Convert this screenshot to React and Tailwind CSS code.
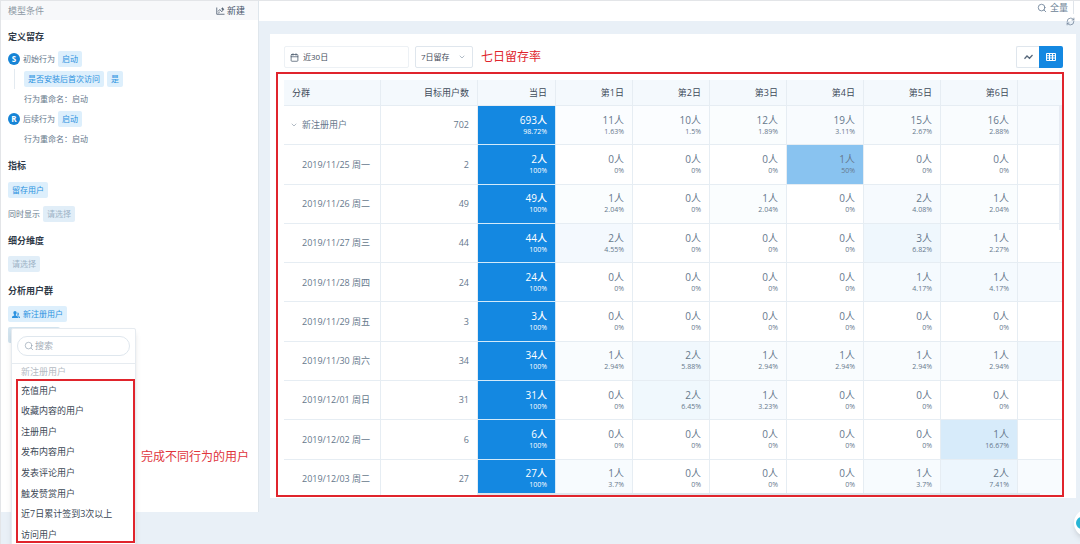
import React, { useState } from 'react';
import { Search, RefreshCw, ChevronDown, Calendar } from 'lucide-react';

const days = ['第1日', '第2日', '第3日', '第4日', '第5日', '第6日'];

// cells: [people, percent] for each day, next: percent of the column cut off by the scroll area
const rows = [
  { name: '新注册用户', total: 702, first: [693, 98.72], cells: [[11, 1.63], [10, 1.5], [12, 1.89], [19, 3.11], [15, 2.67], [16, 2.88]], next: 3 },
  { name: '2019/11/25 周一', total: 2, first: [2, 100], cells: [[0, 0], [0, 0], [0, 0], [1, 50], [0, 0], [0, 0]], next: 0 },
  { name: '2019/11/26 周二', total: 49, first: [49, 100], cells: [[1, 2.04], [0, 0], [1, 2.04], [0, 0], [2, 4.08], [1, 2.04]], next: 0 },
  { name: '2019/11/27 周三', total: 44, first: [44, 100], cells: [[2, 4.55], [0, 0], [0, 0], [0, 0], [3, 6.82], [1, 2.27]], next: 0 },
  { name: '2019/11/28 周四', total: 24, first: [24, 100], cells: [[0, 0], [0, 0], [0, 0], [0, 0], [1, 4.17], [1, 4.17]], next: 4 },
  { name: '2019/11/29 周五', total: 3, first: [3, 100], cells: [[0, 0], [0, 0], [0, 0], [0, 0], [0, 0], [0, 0]], next: 0 },
  { name: '2019/11/30 周六', total: 34, first: [34, 100], cells: [[1, 2.94], [2, 5.88], [1, 2.94], [1, 2.94], [1, 2.94], [1, 2.94]], next: 6 },
  { name: '2019/12/01 周日', total: 31, first: [31, 100], cells: [[0, 0], [2, 6.45], [1, 3.23], [0, 0], [0, 0], [0, 0]], next: 0 },
  { name: '2019/12/02 周一', total: 6, first: [6, 100], cells: [[0, 0], [0, 0], [0, 0], [0, 0], [0, 0], [1, 16.67]], next: 0 },
  { name: '2019/12/03 周二', total: 27, first: [27, 100], cells: [[1, 3.7], [0, 0], [0, 0], [0, 0], [1, 3.7], [2, 7.41]], next: 3 },
];

const groups = ['充值用户', '收藏内容的用户', '注册用户', '发布内容用户', '发表评论用户', '触发赞赏用户', '近7日累计签到3次以上', '访问用户'];

const tint = (percent) => ({ backgroundColor: `rgba(20, 136, 225, ${percent / 100})` });

const Chip = ({ children, muted }) => (
  <button
    className={`flex h-4 items-center gap-[3px] rounded-xs px-1 text-[8px] ${
      muted ? 'bg-[#e1eef8] text-[#9db3c6]' : 'bg-[#ddeffc] text-[#2b92e0]'
    }`}
  >
    {children}
  </button>
);

const Row = ({ children }) => <div className="flex h-5 items-center gap-[3px]">{children}</div>;

const Heading = ({ children }) => (
  <h2 className="h-5 text-[9px] leading-5 font-bold text-[#2f3a48]">{children}</h2>
);

const Badge = ({ children }) => (
  <span className="flex size-3 items-center justify-center rounded-full bg-[#1684d6] text-[8px] font-bold text-white">
    {children}
  </span>
);

const UsersIcon = () => (
  <svg viewBox="0 0 16 14" className="h-[7px] w-2" fill="currentColor">
    <path d="M6 0c2 0 3.200 1.500 3.200 3.500S8 7.200 7.600 7.600v1.200L11 10.400c.8.400 1 1 1 3.600H0c0-2.600.2-3.200 1-3.600l3.400-1.600V7.600C4 7.200 2.800 5.500 2.800 3.500S4 0 6 0z" />
    <path d="M11 3c1.800 0 2.600 1.300 2.600 2.800S13 8.400 12.500 8.900v.7l2.500 1.200c.8.400 1 1 1 3.200h-2.800c0-2.800-.5-3.800-1.600-4.400l-1.400-.7c.6-1 1-2.700.8-5.900z" />
  </svg>
);

const NewIcon = () => (
  <svg viewBox="0 0 18 16" className="h-2 w-[9px]" fill="none" stroke="currentColor" strokeWidth="1.600">
    <path d="M1.500 1v13.500H17" />
    <path d="M4 9l3.500-4 4 4.500L16 4" />
    <path d="M13 1v5M10.500 3.500h5M4.500 12l3-2" />
  </svg>
);

const LineIcon = () => (
  <svg viewBox="0 0 18 12" className="h-[6px] w-[9px]" fill="none" stroke="currentColor" strokeWidth="2.500">
    <path d="M1 9.500l5-5.500 5 4.500 6-6.500" />
  </svg>
);

const GridIcon = () => (
  <svg viewBox="0 0 20 16" className="h-2 w-[10px]" fill="none" stroke="currentColor" strokeWidth="2">
    <path d="M1 1h18v14H1zM1 5.500h18M1 10h18M7 1v14M13 1v14" />
  </svg>
);

const Figures = ({ value }) => (
  <>
    <div className="text-[10px] leading-[13px]">{value[0]}人</div>
    <div className="text-[7px] leading-[10px]">{value[1]}%</div>
  </>
);

const GroupMenu = () => (
  <div className="absolute top-[1px] left-[3px] z-10 w-[125px] rounded-xs border border-[#e6ebf0] bg-white shadow-md">
    <div className="border-b border-[#e6ebf0] px-[5px] py-[7px]">
      <label className="flex h-5 items-center gap-[1px] rounded-full border border-[#dfe7ee] px-1.5">
        <Search className="size-[10px] shrink-0 text-[#8b9bac]" strokeWidth={1.5} />
        <input aria-label="搜索" placeholder="搜索" className="w-full min-w-0 text-[9px] outline-none placeholder:text-[#a3adb8]" />
      </label>
    </div>
    <div className="flex h-4 items-center px-[9px] text-[9px] text-[#b4bbc3]">新注册用户</div>
    <ul className="flex h-[165px] flex-col text-[9px] text-[#3c4856]">
      {groups.map((group) => (
        <li key={group} className="flex flex-1 items-center">
          <button className="w-full px-[9px] text-left">{group}</button>
        </li>
      ))}
    </ul>
    <div className="pointer-events-none absolute top-[50px] right-0 left-1 h-[164px] border-2 border-[#e0242c]" />
  </div>
);

const Sidebar = () => (
  <aside className="relative mb-8 w-[258px] shrink-0 border-r border-[#dfe6ec] bg-white text-[8px] text-[#66788c]">
    <header className="flex h-[19px] items-center justify-between bg-[#f7f8fa] pr-[13px] pl-[7px] text-[9px]">
      <span className="text-[#8d98a5]">模型条件</span>
      <button className="flex items-center gap-[2px] text-[#46566a]">
        <NewIcon />
        新建
      </button>
    </header>

    <div className="flex flex-col gap-[7px] px-[7px] pt-[7px]">
      <section>
        <Heading>定义留存</Heading>
        <div className="pt-[2px]">
          <Row>
            <Badge>S</Badge>
            <span>初始行为</span>
            <Chip>启动</Chip>
          </Row>
          <div className="ml-[6px] border-l border-[#e3eaf0] pl-[9px]">
            <Row>
              <Chip>是否安装后首次访问</Chip>
              <Chip>是</Chip>
            </Row>
          </div>
          <div className="pl-4">
            <Row>行为重命名：启动</Row>
          </div>
          <Row>
            <Badge>R</Badge>
            <span>后续行为</span>
            <Chip>启动</Chip>
          </Row>
          <div className="pl-4">
            <Row>行为重命名：启动</Row>
          </div>
        </div>
      </section>

      <section className="flex flex-col gap-1">
        <Heading>指标</Heading>
        <Row>
          <Chip>留存用户</Chip>
        </Row>
        <Row>
          <span>同时显示</span>
          <Chip muted>请选择</Chip>
        </Row>
      </section>

      <section className="flex flex-col gap-[3px]">
        <Heading>细分维度</Heading>
        <Row>
          <Chip muted>请选择</Chip>
        </Row>
      </section>

      <section className="flex flex-col gap-[3px]">
        <Heading>分析用户群</Heading>
        <Row>
          <Chip>
            <UsersIcon />
            新注册用户
          </Chip>
        </Row>
        <div className="relative">
          <div className="h-4 w-[52px] rounded-xs bg-[#d3e4ef]" />
          <GroupMenu />
        </div>
      </section>
    </div>

    <p className="absolute right-[9px] bottom-[47px] text-[12px] leading-4 text-[#e0353c]">完成不同行为的用户</p>
  </aside>
);

const RetentionTable = () => (
  <div className="relative max-h-[415px] overflow-hidden">
    <table className="h-[419px] w-full table-fixed border-separate border-spacing-0 text-right text-[9px] text-[#66788c]">
      <colgroup>
        <col className="w-[97px]" />
        <col className="w-[97px]" />
        <col className="w-[78px]" />
        {days.map((day) => (
          <col key={day} className="w-[77px]" />
        ))}
        <col />
      </colgroup>
      <thead>
        <tr className="h-[26px] bg-[#f4f9fd] text-[#3f4b5a]">
          <th className="border-r border-b border-[#e6edf3] pl-2 text-left font-normal">分群</th>
          <th className="border-r border-b border-[#e6edf3] pr-2 font-normal">目标用户数</th>
          <th className="border-r border-b border-[#e6edf3] pr-2 font-normal">当日</th>
          {days.map((day) => (
            <th key={day} className="border-r border-b border-[#e6edf3] pr-2 font-normal">
              {day}
            </th>
          ))}
          <th className="border-b border-[#e6edf3]" />
        </tr>
      </thead>
      <tbody>
        {rows.map((row, index) => (
          <tr key={row.name}>
            <td className="border-r border-b border-[#e6edf3] text-left">
              <div className="flex items-center pl-[6px]">
                <span className="w-3">{index === 0 && <ChevronDown className="size-2" strokeWidth={1.5} />}</span>
                <span className="whitespace-nowrap">{row.name}</span>
              </div>
            </td>
            <td className="border-r border-b border-[#e6edf3] pr-2">{row.total}</td>
            <td className="border-r border-b border-[#d3eafa] bg-[#1488e1] bg-clip-padding pr-2 font-medium text-white">
              <Figures value={row.first} />
            </td>
            {row.cells.map((cell, i) => (
              <td key={days[i]} className="border-r border-b border-[#e6edf3] pr-2" style={tint(cell[1])}>
                <Figures value={cell} />
              </td>
            ))}
            <td className="border-b border-[#e6edf3]" style={tint(row.next)} />
          </tr>
        ))}
      </tbody>
    </table>
    {/* scroll bars */}
    <div className="absolute top-[26px] right-0 h-[124px] w-[3px] bg-[#e8ecf3]" />
    <div className="absolute right-[22px] bottom-0 left-[194px] h-[2px] bg-[#dfe5ec]" />
  </div>
);

const App = () => {
  const [range, setRange] = useState('近30日');
  const [period, setPeriod] = useState('7日留存');

  return (
    <div className="relative flex min-h-screen overflow-hidden border-t border-l border-[#e3e5e8] bg-[#e9f0f7] font-['Open_Sans','Noto_Sans_CJK_SC',sans-serif]">
      <Sidebar />

      <div className="min-w-0 flex-1">
        <header className="relative flex h-5 items-start justify-end bg-white pr-[6px] text-[9px] text-[#6b7f96]">
          <button className="flex h-[13px] items-center gap-[3px] border-r border-[#dfe4ea] pr-[5px]">
            <Search className="size-[10px]" strokeWidth={2} />
            全量
          </button>
          <button aria-label="刷新" className="absolute right-[5px] -bottom-[5px]">
            <RefreshCw className="size-[9px]" strokeWidth={2} />
          </button>
        </header>

        <main className="mt-[13px] mr-1 ml-[11px] bg-white px-[6px] pt-3 pb-[1px]">
          <div className="flex h-[22px] items-center pr-[7px] pl-2">
            <label className="flex h-[22px] w-[125px] items-center gap-1 rounded-xs border border-[#edf1f5] px-[5px]">
              <Calendar className="size-[9px] shrink-0 text-[#46566a]" strokeWidth={2} />
              <input
                aria-label="日期"
                value={range}
                onChange={(e) => setRange(e.target.value)}
                className="w-full min-w-0 text-[8px] text-[#3f4b5a] outline-none"
              />
            </label>
            <div className="relative ml-[6px] flex">
              <select
                aria-label="留存周期"
                value={period}
                onChange={(e) => setPeriod(e.target.value)}
                className="h-[22px] w-[58px] appearance-none rounded-xs border border-[#dfe6ed] bg-white pl-[5px] text-[8px] text-[#3f4b5a]"
              >
                <option>7日留存</option>
              </select>
              <ChevronDown className="pointer-events-none absolute top-[7px] right-[7px] size-2 text-[#8b9bac]" strokeWidth={2} />
            </div>
            <span className="ml-2 text-[12px] leading-4 text-[#e0242c]">七日留存率</span>
            <div className="ml-auto flex h-[22px] text-[#56677a]">
              <button aria-label="折线图" className="flex w-[23px] items-center justify-center rounded-l-xs border border-r-0 border-[#dfe6ed]">
                <LineIcon />
              </button>
              <button aria-label="表格" className="flex w-6 items-center justify-center rounded-r-xs bg-[#1488e1] text-white">
                <GridIcon />
              </button>
            </div>
          </div>

          <div className="mt-1 mr-[6px] border-2 border-[#e0242c] pt-[6px] pl-[6px]">
            <RetentionTable />
          </div>
        </main>
      </div>

      <button aria-label="客服" className="absolute -right-[22px] bottom-[7px] flex size-7 items-center justify-start rounded-full bg-white pl-[2px] shadow-md">
        <span className="size-3 rounded-full bg-[#27b5d5]" />
      </button>
    </div>
  );
};

export default App;
